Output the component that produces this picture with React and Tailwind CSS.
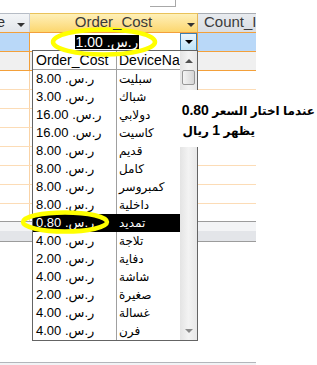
import React from "react";

const rows = [
  ["8.00", "سبليت"],
  ["3.00", "شباك"],
  ["16.00", "دولابي"],
  ["16.00", "كاسيت"],
  ["8.00", "قديم"],
  ["8.00", "كامل"],
  ["8.00", "كمبروسر"],
  ["8.00", "داخلية"],
  ["0.80", "تمديد"],
  ["4.00", "تلاجة"],
  ["2.00", "دفاية"],
  ["4.00", "شاشة"],
  ["2.00", "صغيرة"],
  ["4.00", "غسالة"],
  ["4.00", "فرن"],
];

function Arrow({ color = "border-t-[#333]" }) {
  return (
    <div
      className={`w-0 h-0 border-l-[4px] border-r-[4px] border-t-[4px] border-l-transparent border-r-transparent ${color}`}
    />
  );
}

function Money({ v }) {
  return <span dir="rtl">{"ر.س. " + v}</span>;
}

function PlainRow({ last }) {
  return (
    <div className={`flex ${last ? "h-[17px]" : "h-[19px] border-b border-[#fcdcb6]"}`}>
      <div className="w-[30px] border-r border-[#fad3a6]" />
      <div className="w-[168px] border-r border-[#fad3a6]" />
      <div className="w-[58px]" />
    </div>
  );
}

export default function App() {
  return (
    <div className="relative w-[317px] h-[365px] overflow-hidden bg-white font-['Liberation_Sans','DejaVu_Sans',sans-serif] text-black">
      {/* datasheet */}
      <div className="flex flex-col w-[256px] h-full">
        <div className="h-[13px] flex">
          <div className="ml-[150px] w-[26px] h-[7px] border-r border-b border-[#a8a8a8]" />
        </div>
        {/* header */}
        <div className="flex h-[20px] border-b border-[#f3a03a]">
          <div className="relative w-[30px] border-r border-[#c9ced6] border-t border-t-[#b6bcc5] bg-gradient-to-b from-[#f3f5f7] to-[#e1e5ea] overflow-hidden">
            <span className="absolute right-[24px] top-[0px] text-[15px] leading-[16px] text-[#333] whitespace-nowrap">
              Name
            </span>
            <div className="absolute left-[17px] top-[9px]">
              <Arrow />
            </div>
          </div>
          <div className="relative w-[168px] border-r border-[#e3b75a] border-t border-t-[#e9c25a] bg-gradient-to-b from-[#fef0b8] to-[#fcd66c] flex justify-center">
            <span className="relative z-50 text-[15px] text-[#3a3a3a] leading-[15px]">Order_Cost</span>
            <div className="absolute left-[157px] top-[9px]">
              <Arrow />
            </div>
          </div>
          <div className="w-[58px] border-t border-t-[#a9adb3] bg-gradient-to-b from-[#e8ebef] to-[#d9dde3] overflow-hidden flex pl-[6px]">
            <span className="text-[15px] text-[#3a3a3a] leading-[15px] whitespace-nowrap">Count_Items</span>
          </div>
        </div>
        {/* row 1 - current */}
        <div className="flex h-[19px] border-b border-[#f3a03a]">
          <div className="w-[30px] border-r border-[#f3a03a] bg-[#b9d8f8]" />
          <div className="w-[168px] border-r border-[#f3a03a] bg-white flex">
            <div className="flex-1 flex items-center justify-center pl-[4px]">
              <span className="bg-black text-white text-[14px] leading-[14px] px-[1px]">
                <Money v="1.00" />
              </span>
            </div>
            <div className="w-[17px] border border-[#3c7fb1] bg-gradient-to-b from-[#eaf6fd] to-[#bfe4f8] flex items-center justify-center">
              <Arrow color="border-t-black" />
            </div>
          </div>
          <div className="w-[58px] bg-[#b9d8f8]" />
        </div>
        {/* row 2 */}
        <div className="flex h-[19px] border-b border-[#f3a03a] bg-[#f0f0f0]">
          <div className="w-[30px] border-r border-[#f3a03a]" />
          <div className="w-[168px] border-r border-[#f3a03a]" />
          <div className="w-[58px]" />
        </div>
        <PlainRow />
        <PlainRow />
        <PlainRow />
        <PlainRow />
        <PlainRow />
        <PlainRow />
        <PlainRow />
        <PlainRow last />
        {/* bottom band */}
        <div className="flex flex-col border-t border-b border-[#9c9c9c]">
          <div className="h-[9px] bg-[#f3f4f6]" />
          <div className="h-[10px] bg-[#e3e5e9]" />
        </div>
        <div className="flex-1" />
        <div className="h-[3px] border-t border-[#b3b6bb] bg-[#f2f3f5]" />
      </div>

      {/* dropdown list */}
      <div className="absolute z-20 left-[32px] top-[50px] w-[166px] h-[291px] border border-[#646464] bg-white flex text-[13px]">
        <div className="w-[147px] flex flex-col">
          <div className="flex h-[19px] border-b border-[#a0a0a0] shrink-0">
            <div className="w-[84px] border-r border-[#a0a0a0] pl-[3px] flex items-center overflow-hidden whitespace-nowrap text-[14px]">
              Order_Cost
            </div>
            <div className="w-[63px] pl-[2px] flex items-center overflow-hidden whitespace-nowrap text-[14px]">
              DeviceName
            </div>
          </div>
          {rows.map(([v, n], i) => {
            const sel = i === 8;
            return (
              <div
                key={i}
                className={`flex h-[18px] shrink-0 ${sel ? "bg-black text-white" : ""}`}
              >
                <div
                  className={`w-[84px] border-r pl-[3px] flex items-center whitespace-nowrap ${
                    sel ? "border-black" : "border-[#a0a0a0]"
                  }`}
                >
                  <Money v={v} />
                </div>
                <div className="w-[63px] pl-[2px] flex items-center whitespace-nowrap text-[12px]">
                  <span dir="rtl">{n}</span>
                </div>
              </div>
            );
          })}
        </div>
        {/* scrollbar */}
        <div className="w-[17px] flex flex-col bg-gradient-to-r from-[#e4e4e4] via-[#f3f3f3] to-[#e8e8e8]">
          <div className="h-[19px] flex items-center justify-center">
            <div className="w-0 h-0 border-l-[4px] border-r-[4px] border-b-[4px] border-l-transparent border-r-transparent border-b-[#505050]" />
          </div>
          <div className="mx-[2px] h-[15px] border border-[#979797] rounded-[2px] bg-gradient-to-r from-[#f4f4f4] to-[#d6d6d6]" />
          <div className="flex-1" />
          <div className="h-[18px] flex items-center justify-center">
            <Arrow color="border-t-[#8a8a8a]" />
          </div>
        </div>
      </div>

      {/* annotation */}
      <div className="absolute z-30 left-[180px] top-[90px] w-[137px] h-[57px] bg-white flex flex-col items-end pt-[11px] font-bold text-[12px] leading-[19px]">
        <div dir="rtl" className="pr-[2px] whitespace-nowrap">
          عندما اختار السعر <span className="text-[14px]">0.80</span>
        </div>
        <div dir="rtl" className="mr-[62px] whitespace-nowrap">
          يظهر <span className="text-[14px]">1</span> ريال
        </div>
      </div>

      {/* highlight ellipses */}
      <svg className="absolute z-40 left-0 top-0 pointer-events-none" width="317" height="365">
        <ellipse cx="104" cy="42" rx="51" ry="12.5" fill="none" stroke="#ffff00" strokeWidth="4.5" />
        <ellipse cx="65" cy="222" rx="42" ry="9.5" fill="none" stroke="#ffff00" strokeWidth="4.5" />
      </svg>
    </div>
  );
}
